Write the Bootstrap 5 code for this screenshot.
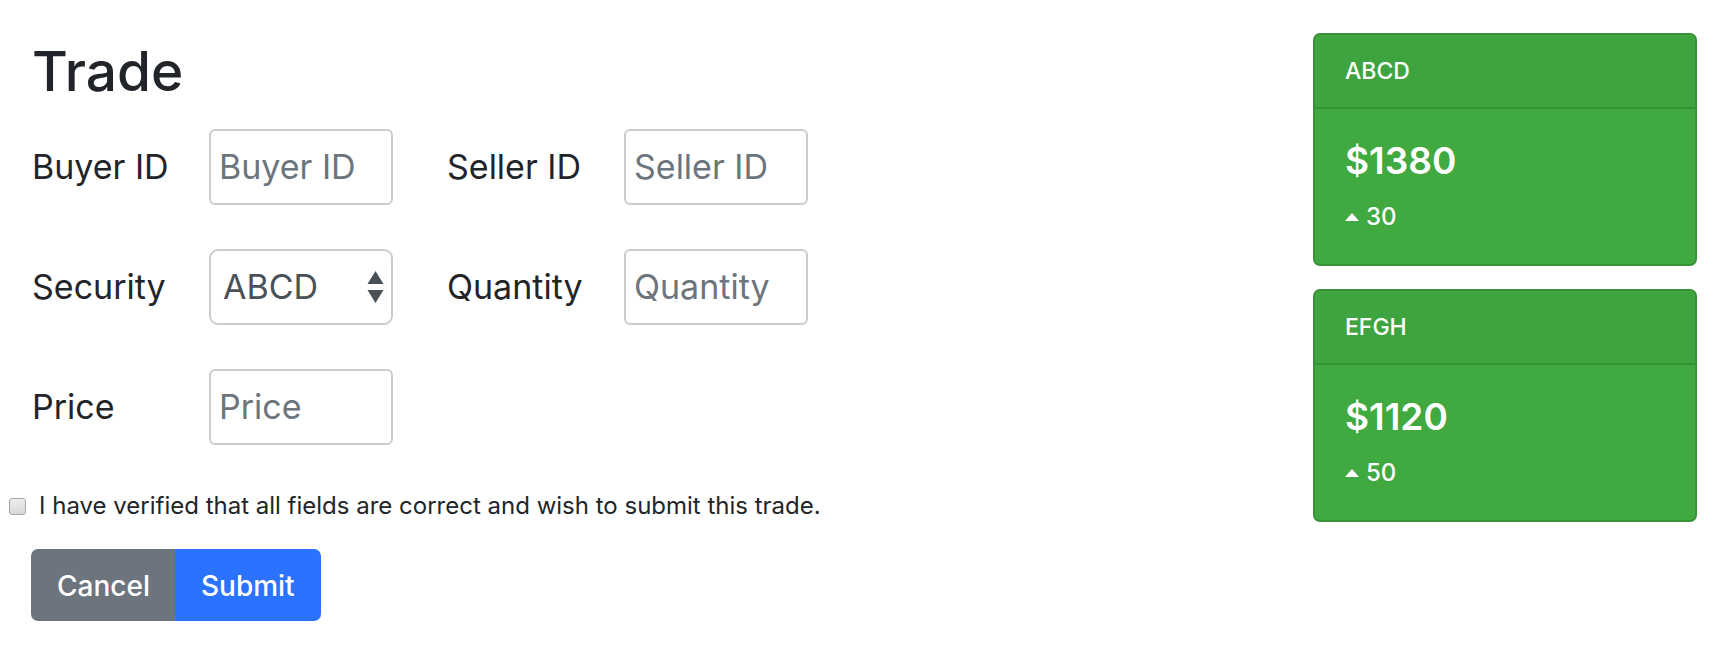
<!DOCTYPE html>
<html lang="en">
<head>
<meta charset="utf-8">
<meta name="viewport" content="width=device-width, initial-scale=1">
<title>Trade</title>
<link rel="stylesheet" href="https://cdn.jsdelivr.net/npm/bootstrap@5.3.0/dist/css/bootstrap.min.css">
<style>
  body { font-family: Inter, "Liberation Sans", sans-serif; color: #212529; background: #fff; font-size: 24px; line-height: 36px; }
  .page { padding: 33px 32px; }
  .trade-form { flex: 0 1 776px; min-width: 0; }
  .trade-title { font-size: 55px; line-height: 76px; font-weight: 500; margin-bottom: 20px; }
  .fields { --bs-gutter-x: 54px; --bs-gutter-y: 44px; }
  .field-label { flex: 0 0 177px; font-size: 34px; line-height: 48px; }
  .field-box { flex: 1 1 0; min-width: 0; height: 76px; font-size: 34px; line-height: 48px; padding: 11px 8px 13px; border: 2px solid #ccc; border-radius: 6px; }
  .field-box::placeholder { color: #6c757d; }
  select.field-box { appearance: none; padding: 12px; border-radius: 9px; color: #495057; background: #fff; }
  .sorter { right: 9px; width: 17px; height: 32px; fill: #495057; pointer-events: none; }
  .verify { margin: 43px 0 25px -23px; gap: 13px; }
  .verify-box { appearance: none; width: 17px; height: 17px; margin: 0; border: 1px solid #a6a6a6; border-radius: 3px; background: linear-gradient(#eee, #d8d8d8); }
  .verify-box:checked { background: #2b72ff; }
  .trade-actions { margin-left: -1px; }
  .trade-actions .btn { height: 72px; font-size: 28px; font-weight: 500; line-height: 44px; padding: 13px 24px 11px; border: 2px solid transparent; border-radius: 7px; color: #fff; }
  .trade-actions .btn-secondary { background: #6c757d; }
  .trade-actions .btn-primary { background: #2b72ff; }
  .quotes { flex: 0 0 384px; gap: 23px; }
  .quote { background: #40a940; color: #fff; border: 2px solid #389338; border-radius: 7px; }
  .quote-head { padding: 18px 30px; background: #3ea440; border-bottom: 2px solid #339236; font-weight: 500; font-size: 23px; }
  .quote-body { padding: 30px 30px 29px; }
  .quote-price { font-size: 37px; line-height: 44px; font-weight: 600; margin-bottom: 16px; }
  .quote-change { font-size: 24px; font-weight: 500; gap: 7px; }
  .quote-change svg { width: 14px; height: 8px; fill: #fff; }
</style>
</head>
<body>
<main class="page d-flex justify-content-between align-items-start gap-5">
  <form class="trade-form">
    <h1 class="trade-title">Trade</h1>
    <div class="fields row row-cols-2">
      <div class="col d-flex align-items-center">
        <label class="field-label" for="buyer">Buyer ID</label>
        <input class="form-control field-box" id="buyer" type="text" placeholder="Buyer ID">
      </div>
      <div class="col d-flex align-items-center">
        <label class="field-label" for="seller">Seller ID</label>
        <input class="form-control field-box" id="seller" type="text" placeholder="Seller ID">
      </div>
      <div class="col">
        <div class="position-relative d-flex align-items-center">
          <label class="field-label" for="security">Security</label>
          <select class="field-box" id="security"><option>ABCD</option><option>EFGH</option></select>
          <svg class="sorter position-absolute" viewBox="0 0 17 32" aria-hidden="true"><path d="M8.500 0 16.500 13H.5zM.5 19h16L8.500 32z"/></svg>
        </div>
      </div>
      <div class="col d-flex align-items-center">
        <label class="field-label" for="quantity">Quantity</label>
        <input class="form-control field-box" id="quantity" type="text" placeholder="Quantity">
      </div>
      <div class="col d-flex align-items-center">
        <label class="field-label" for="price">Price</label>
        <input class="form-control field-box" id="price" type="text" placeholder="Price">
      </div>
    </div>
    <div class="verify d-flex align-items-center">
      <input class="verify-box flex-shrink-0" id="verified" type="checkbox">
      <label class="text-nowrap" for="verified">I have verified that all fields are correct and wish to submit this trade.</label>
    </div>
    <div class="trade-actions btn-group">
      <button class="btn btn-secondary" type="button">Cancel</button>
      <button class="btn btn-primary" type="submit">Submit</button>
    </div>
  </form>
  <aside class="quotes d-flex flex-column">
    <section class="quote overflow-hidden">
      <div class="quote-head">ABCD</div>
      <div class="quote-body">
        <div class="quote-price">$1380</div>
        <div class="quote-change d-flex align-items-center"><svg viewBox="0 0 14 8" aria-hidden="true"><path d="M7 0 14 8H0z"/></svg>30</div>
      </div>
    </section>
    <section class="quote overflow-hidden">
      <div class="quote-head">EFGH</div>
      <div class="quote-body">
        <div class="quote-price">$1120</div>
        <div class="quote-change d-flex align-items-center"><svg viewBox="0 0 14 8" aria-hidden="true"><path d="M7 0 14 8H0z"/></svg>50</div>
      </div>
    </section>
  </aside>
</main>
<script src="https://cdn.jsdelivr.net/npm/bootstrap@5.3.0/dist/js/bootstrap.bundle.min.js"></script>
</body>
</html>
